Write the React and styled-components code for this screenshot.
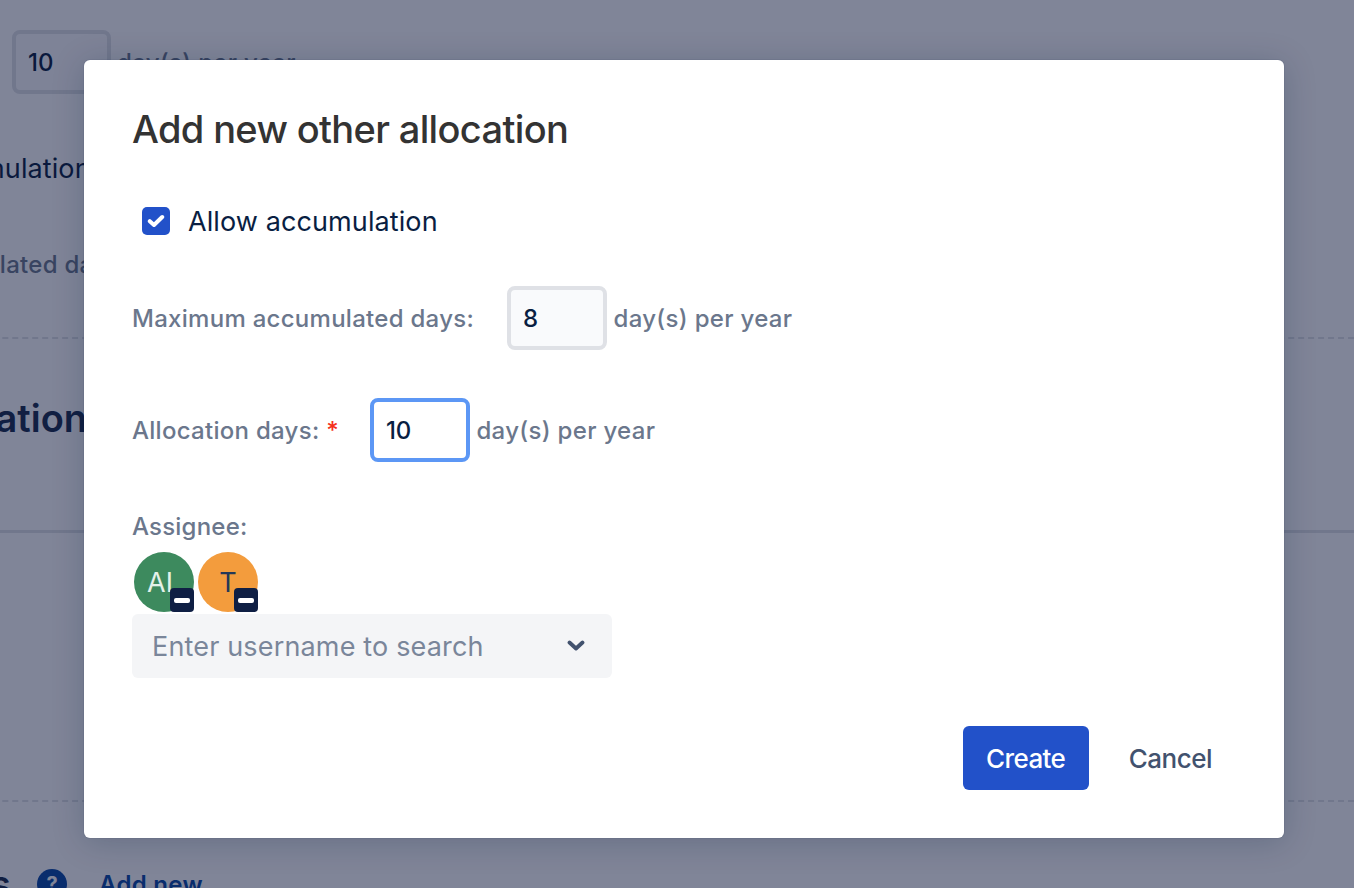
import styled, { createGlobalStyle } from "styled-components";

const GlobalStyle = createGlobalStyle`
	html, body {
		margin: 0;
		padding: 0;
		height: 100%;
		overflow: hidden;
		background: #fff;
		font-family: Inter, "Liberation Sans", sans-serif;
	}
	* {
		box-sizing: border-box;
	}
`;

const CheckIcon = () => (
	<svg width="18" height="14" viewBox="0 0 18 14" fill="none">
		<path d="M2.8 7.2 7 11 15.2 3" stroke="#fff" strokeWidth="4" strokeLinecap="round" strokeLinejoin="round" />
	</svg>
);

const ChevronIcon = () => (
	<svg width="18" height="12" viewBox="0 0 18 12" fill="none">
		<path d="M2.5 2.5 9 8.5l6.5-6" stroke="#42526e" strokeWidth="3.8" strokeLinecap="round" strokeLinejoin="round" />
	</svg>
);

const Avatar = ({ color, textColor, initials, nudge }) => (
	<AvatarCircle $color={color} $textColor={textColor} $nudge={nudge}>
		{initials}
		<RemoveBadge>
			<RemoveBar />
		</RemoveBadge>
	</AvatarCircle>
);

export default function App() {
	return (
		<Page>
			<GlobalStyle />
			<Backdrop>
				<BackRow $top={30}>
					<BackInput>10</BackInput>
					<BackUnit>day(s) per year</BackUnit>
				</BackRow>
				<BackCheckLabel>Allow accumulation</BackCheckLabel>
				<BackLabel>Maximum accumulated days:</BackLabel>
				<BackDashed $top={57} />
				<BackHeading>Other allocation</BackHeading>
				<BackSolid />
				<BackDashed $top={267} />
				<BackFooter>
					<BackFooterTitle>
						<span>Public holidays</span>
					</BackFooterTitle>
					<HelpDot>?</HelpDot>
					<AddNow>Add new</AddNow>
				</BackFooter>
			</Backdrop>

			<Overlay>
				<Modal>
					<Title>Add new other allocation</Title>

					<CheckRow>
						<CheckBox>
							<CheckIcon />
						</CheckBox>
						<CheckLabel>Allow accumulation</CheckLabel>
					</CheckRow>

					<FieldRow $top={49}>
						<FieldLabel $gap={33}>Maximum accumulated days:</FieldLabel>
						<NumberBox>8</NumberBox>
						<Unit>day(s) per year</Unit>
					</FieldRow>

					<FieldRow $top={48}>
						<FieldLabel $gap={31}>
							Allocation days: <Required>*</Required>
						</FieldLabel>
						<NumberBox $focused>10</NumberBox>
						<Unit>day(s) per year</Unit>
					</FieldRow>

					<AssigneeLabel>Assignee:</AssigneeLabel>
					<AvatarRow>
						<Avatar color="#3d8a5e" textColor="#e4f1e9" initials="AI" nudge={8} />
						<Avatar color="#f39c3d" textColor="#253858" initials="T" nudge={0} />
					</AvatarRow>
					<SearchSelect>
						<Placeholder>Enter username to search</Placeholder>
						<ChevronIcon />
					</SearchSelect>

					<Actions>
						<PrimaryButton>Create</PrimaryButton>
						<GhostButton>Cancel</GhostButton>
					</Actions>
				</Modal>
			</Overlay>
		</Page>
	);
}

const Page = styled.div`
	position: relative;
	width: 1354px;
	height: 888px;
	overflow: hidden;
	background: #fff;
`;

const Backdrop = styled.div`
	display: flex;
	flex-direction: column;
	margin-left: -207px;
	width: 1561px;
	color: #172b4d;
`;

const BackRow = styled.div`
	display: flex;
	align-items: center;
	gap: 6px;
	margin-top: ${(p) => p.$top}px;
	margin-left: 219px;
`;

const BackInput = styled.div`
	width: 99px;
	height: 64px;
	padding-left: 12px;
	display: flex;
	align-items: center;
	border: 4px solid #dfe1e6;
	border-radius: 8px;
	background: #fafbfc;
	font-size: 24px;
	font-weight: 500;
	color: #091e42;
`;

const BackUnit = styled.span`
	font-size: 24px;
	font-weight: 500;
	letter-spacing: 0.32px;
	color: #6b778c;
`;

const BackCheckLabel = styled.div`
	margin-top: 59px;
	margin-left: 48px;
	font-size: 27px;
	line-height: 32px;
	letter-spacing: 0.1px;
	white-space: nowrap;
	color: #091e42;
`;

const BackLabel = styled.div`
	margin-top: 65px;
	margin-left: -7px;
	font-size: 24px;
	line-height: 30px;
	font-weight: 500;
	letter-spacing: 0.28px;
	white-space: nowrap;
	color: #6b778c;
`;

const BackDashed = styled.div`
	margin-top: ${(p) => p.$top}px;
	border-top: 2px dashed #dfe1e6;
`;

const BackHeading = styled.div`
	margin-top: 56px;
	margin-left: 2px;
	font-size: 38px;
	line-height: 46px;
	font-weight: 600;
	white-space: nowrap;
`;

const BackSolid = styled.div`
	margin-top: 89px;
	border-top: 3px solid #dfe1e6;
`;

const BackFooter = styled.div`
	display: flex;
	align-items: center;
	margin-top: 59px;
`;

const BackFooterTitle = styled.div`
	display: flex;
	justify-content: flex-end;
	flex-shrink: 0;
	width: 218px;
	font-size: 38px;
	line-height: 46px;
	font-weight: 600;
	white-space: nowrap;
`;

const HelpDot = styled.span`
	width: 30px;
	height: 30px;
	margin-left: 26px;
	border-radius: 50%;
	display: flex;
	align-items: center;
	justify-content: center;
	background: #0747a6;
	color: #fff;
	font-size: 20px;
	font-weight: 700;
`;

const AddNow = styled.span`
	margin-left: 32px;
	font-size: 24px;
	font-weight: 600;
	letter-spacing: 0.3px;
	color: #0747a6;
`;

const Overlay = styled.div`
	position: absolute;
	inset: 0;
	display: flex;
	justify-content: center;
	padding: 60px 0 0 14px;
	background: rgba(12, 22, 58, 0.52);
`;

const Modal = styled.div`
	display: flex;
	flex-direction: column;
	align-items: flex-start;
	flex-shrink: 0;
	width: 1200px;
	height: 778px;
	padding: 46px 48px 48px;
	border-radius: 6px;
	background: #fff;
	box-shadow: 0 0 0 1px rgba(9, 30, 66, 0.06), 0 4px 32px rgba(9, 30, 66, 0.22);
`;

const Title = styled.h1`
	margin: 0;
	font-size: 38px;
	line-height: 46px;
	font-weight: 500;
	letter-spacing: -0.65px;
	color: #333;
`;

const CheckRow = styled.div`
	display: flex;
	align-items: center;
	gap: 18px;
	margin-top: 53px;
	margin-left: 10px;
`;

const CheckBox = styled.span`
	width: 28px;
	height: 28px;
	border-radius: 5px;
	display: flex;
	align-items: center;
	justify-content: center;
	background: #2251c9;
`;

const CheckLabel = styled.span`
	font-size: 27px;
	line-height: 30px;
	letter-spacing: 0.1px;
	padding-top: 2px;
	color: #091e42;
`;

const FieldRow = styled.div`
	display: flex;
	align-items: center;
	margin-top: ${(p) => p.$top}px;
`;

const FieldLabel = styled.span`
	margin-right: ${(p) => p.$gap}px;
	padding-top: 2px;
	font-size: 24px;
	line-height: 30px;
	font-weight: 500;
	letter-spacing: 0.28px;
	white-space: pre;
	color: #6b778c;
`;

const Required = styled.span`
	color: #f5301c;
`;

const NumberBox = styled.div`
	display: flex;
	align-items: center;
	width: 100px;
	height: 64px;
	padding-left: 12px;
	border: 4px solid ${(p) => (p.$focused ? "#5c97f5" : "#dfe1e6")};
	border-radius: 8px;
	background: ${(p) => (p.$focused ? "#fff" : "#f9fafc")};
	font-size: 24px;
	font-weight: 500;
	color: #091e42;
`;

const Unit = styled.span`
	margin-left: 6.5px;
	padding-top: 2px;
	font-size: 24px;
	line-height: 30px;
	font-weight: 500;
	letter-spacing: 0.32px;
	color: #6b778c;
`;

const AssigneeLabel = styled.div`
	margin-top: 51px;
	font-size: 24px;
	line-height: 28px;
	font-weight: 500;
	letter-spacing: 0.2px;
	color: #6b778c;
`;

const AvatarRow = styled.div`
	display: flex;
	gap: 4px;
	margin-top: 11px;
	margin-left: 2px;
`;

const AvatarCircle = styled.div`
	position: relative;
	width: 60px;
	height: 60px;
	padding-right: ${(p) => p.$nudge}px;
	border-radius: 50%;
	display: flex;
	align-items: center;
	justify-content: center;
	background: ${(p) => p.$color};
	color: ${(p) => p.$textColor};
	font-size: 27px;
`;

const RemoveBadge = styled.span`
	position: absolute;
	right: 0;
	bottom: 0;
	width: 24px;
	height: 24px;
	border-radius: 4px;
	display: flex;
	align-items: center;
	justify-content: center;
	background: #0f1f44;
`;

const RemoveBar = styled.span`
	width: 16px;
	height: 5px;
	border-radius: 2px;
	background: #fff;
`;

const SearchSelect = styled.div`
	display: flex;
	align-items: center;
	justify-content: space-between;
	width: 480px;
	height: 64px;
	margin-top: 2px;
	padding: 0 27px 0 20px;
	border-radius: 6px;
	background: #f4f5f7;
`;

const Placeholder = styled.span`
	font-size: 27px;
	letter-spacing: 0.16px;
	color: #7a869a;
`;

const Actions = styled.div`
	display: flex;
	align-items: center;
	align-self: flex-end;
	gap: 40px;
	margin-top: 48px;
	margin-right: 24px;
`;

const PrimaryButton = styled.button`
	width: 126px;
	height: 64px;
	border: 0;
	border-radius: 6px;
	background: #2251c9;
	color: #fff;
	font: 500 26px Inter, "Liberation Sans", sans-serif;
	letter-spacing: -0.6px;
`;

const GhostButton = styled.button`
	padding: 0;
	border: 0;
	background: transparent;
	color: #42526e;
	font: 500 26px Inter, "Liberation Sans", sans-serif;
	letter-spacing: -0.5px;
`;
